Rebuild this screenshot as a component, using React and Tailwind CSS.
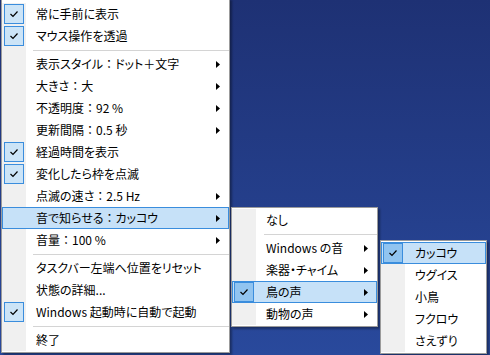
import React from "react";

const font = "font-['Yu_Gothic_UI','Noto_Sans_CJK_JP',sans-serif] [font-feature-settings:'palt'] text-[12px] leading-none text-black";

function Check({ dark }) {
    return (
        <div className={`ml-[2px] w-[20px] h-[20px] border border-[#3a8ddd] flex items-center justify-center ${dark ? "bg-[#91c4f0]" : "bg-[#cce4f7]"}`}>
            <svg width="10" height="8" viewBox="0 0 10 8">
                <path d="M1.5 4 L4 6.5 L8.5 1.5" fill="none" stroke="#000" strokeWidth="1.2" />
            </svg>
        </div>
    );
}

function Arrow() {
    return (
        <svg width="4" height="7" viewBox="0 0 4 7" className="shrink-0">
            <path d="M0 0 L4 3.5 L0 7 Z" fill="#000" />
        </svg>
    );
}

// full-width colon keeps its width, like the Windows UI font
function Label({ text }) {
    const parts = text.split("：");
    if (parts.length === 1) return text;
    return (
        <>
            {parts[0]}
            <span className="[font-feature-settings:normal]">：</span>
            {parts[1]}
        </>
    );
}

function Item({ label, check, arrow, hl, arrowPad = "pr-[9px]" }) {
    return (
        <div className={`flex items-center h-[22px] ${hl ? "bg-[#c6e1f8] outline outline-1 -outline-offset-1 outline-[#3a8ddd]" : ""}`}>
            <div className="w-[24px] h-full flex items-center">
                {check && <Check dark={hl} />}
            </div>
            <div className="flex-1 pl-[10px] whitespace-nowrap"><Label text={label} /></div>
            {arrow && <div className={arrowPad}><Arrow /></div>}
        </div>
    );
}

function Sep({ left = "ml-[31px]" }) {
    return (
        <div className="h-[6px] flex items-center">
            <div className={`${left} flex-1 h-px bg-[#d4d4d4]`} />
        </div>
    );
}

function Menu({ className, children }) {
    return (
        <div className={`absolute border border-[#9b9b9b] shadow-[2px_2px_2px_rgba(0,0,0,0.35)] bg-white ${className}`}>
            <div className="relative">
                <div className="absolute left-0 top-0 bottom-0 w-[24px] bg-[#f0f0f0]" />
                <div className="relative">{children}</div>
            </div>
        </div>
    );
}

export default function App() {
    return (
        <div className={`relative w-[490px] h-[355px] overflow-hidden bg-gradient-to-b from-[#1e3174] to-[#29499c] ${font}`}>
            <Menu className="left-[1px] top-[-2px] w-[229px] pt-[4px] pb-[1px]">
                <Item label="常に手前に表示" check />
                <Item label="マウス操作を透過" check />
                <Sep />
                <Item label="表示スタイル：ドット＋文字" arrow />
                <Item label="大きさ：大" arrow />
                <Item label="不透明度：92 %" arrow />
                <Item label="更新間隔：0.5 秒" arrow />
                <Item label="経過時間を表示" check />
                <Item label="変化したら枠を点滅" check />
                <Item label="点滅の速さ：2.5 Hz" arrow />
                <Item label="音で知らせる：カッコウ" arrow hl />
                <Item label="音量：100 %" arrow />
                <Sep />
                <Item label="タスクバー左端へ位置をリセット" />
                <Item label="状態の詳細..." />
                <Item label="Windows 起動時に自動で起動" check />
                <Sep />
                <Item label="終了" />
            </Menu>

            <Menu className="left-[231px] top-[207px] w-[147px] py-[1px]">
                <Item label="なし" />
                <Sep left="ml-[32px]" />
                <Item label="Windows の音" arrow />
                <Item label="楽器・チャイム" arrow />
                <Item label="鳥の声" check arrow hl />
                <Item label="動物の声" arrow />
            </Menu>

            <Menu className="left-[380px] top-[240px] w-[107px] py-[1px]">
                <Item label="カッコウ" check hl />
                <Item label="ウグイス" />
                <Item label="小鳥" />
                <Item label="フクロウ" />
                <Item label="さえずり" />
            </Menu>
        </div>
    );
}
